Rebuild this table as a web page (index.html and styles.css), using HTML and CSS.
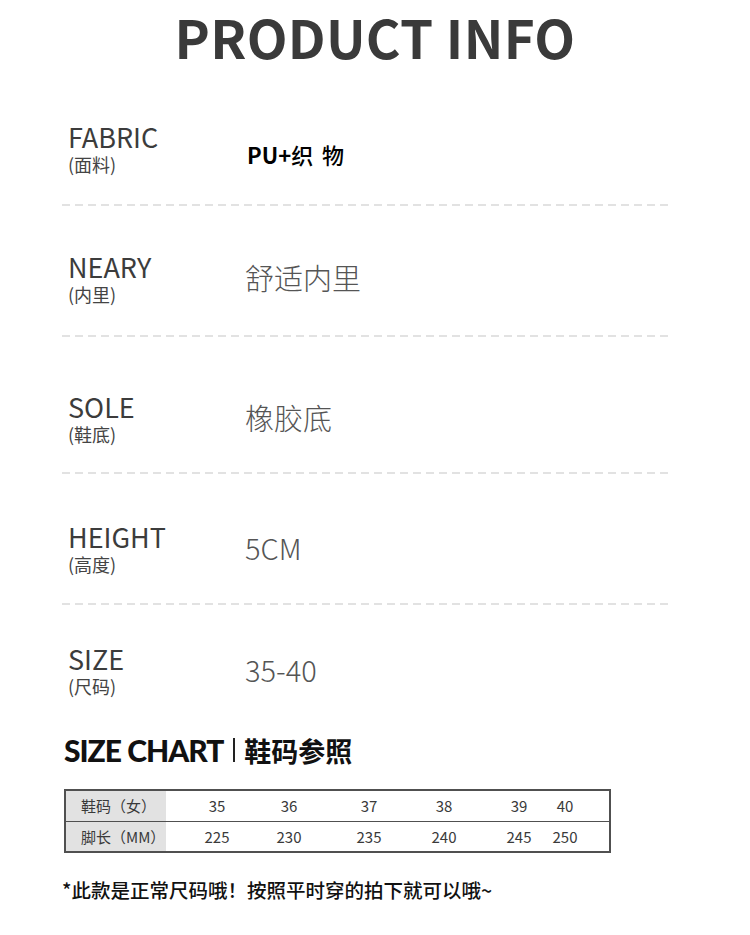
FILE: index.html
```html
<!DOCTYPE html>
<html lang="zh-CN">
<head>
<meta charset="utf-8">
<title>Product Info</title>
<link rel="stylesheet" href="styles.css">
</head>
<body>
<main class="page">
  <h1 class="title">PRODUCT INFO</h1>

  <section class="spec spec-fabric">
    <div class="label"><div class="en">FABRIC</div><div class="cn">(面料)</div></div>
    <div class="value value-bold"><span class="pu">PU+</span><span class="kai">织 物</span></div>
  </section>
  <div class="divider"></div>

  <section class="spec spec-neary">
    <div class="label"><div class="en">NEARY</div><div class="cn">(内里)</div></div>
    <div class="value">舒适内里</div>
  </section>
  <div class="divider"></div>

  <section class="spec spec-sole">
    <div class="label"><div class="en">SOLE</div><div class="cn">(鞋底)</div></div>
    <div class="value">橡胶底</div>
  </section>
  <div class="divider"></div>

  <section class="spec spec-height">
    <div class="label"><div class="en">HEIGHT</div><div class="cn">(高度)</div></div>
    <div class="value value-num">5CM</div>
  </section>
  <div class="divider"></div>

  <section class="spec spec-size">
    <div class="label"><div class="en">SIZE</div><div class="cn">(尺码)</div></div>
    <div class="value value-num">35-40</div>
  </section>

  <h2 class="chart-title"><span class="chart-en">SIZE CHART</span><span class="bar"></span><span class="chart-cn">鞋码参照</span></h2>

  <div class="size-table">
    <div class="trow">
      <div class="head">鞋码（女）</div>
      <div class="v">35</div><div class="v">36</div><div class="v">37</div><div class="v">38</div><div class="v">39</div><div class="v">40</div>
    </div>
    <div class="trow">
      <div class="head">脚长（MM）</div>
      <div class="v">225</div><div class="v">230</div><div class="v">235</div><div class="v">240</div><div class="v">245</div><div class="v">250</div>
    </div>
  </div>

  <p class="note">*此款是正常尺码哦！按照平时穿的拍下就可以哦~</p>
</main>
</body>
</html>
```

FILE: styles.css
```css
html, body {
  margin: 0;
  padding: 0;
  background: #ffffff;
}

.page {
  width: 750px;
  height: 935px;
  overflow: hidden;
  font-family: "Noto Sans CJK SC", "Noto Sans", sans-serif;
  color: #3f3f3f;
}

.title {
  margin: 0;
  text-align: center;
  font-size: 53px;
  line-height: 72px;
  font-weight: 700;
  color: #3a3a3a;
  letter-spacing: 0.3px;
}

.spec {
  display: flex;
  align-items: center;
  padding-left: 68px;
}

.spec-fabric { padding-top: 47px; padding-bottom: 29px; }
.spec-neary  { padding-top: 43px; padding-bottom: 30px; }
.spec-sole   { padding-top: 52px; padding-bottom: 27px; }
.spec-height { padding-top: 45px; padding-bottom: 28px; }
.spec-size   { padding-top: 36px; padding-bottom: 0; }

.label {
  width: 177px;
  flex: none;
}

.label .en {
  font-size: 27px;
  line-height: 35px;
  font-weight: 400;
  color: #3c3c3c;
}

.label .cn {
  font-size: 18px;
  line-height: 21px;
  color: #444;
}

.value {
  font-size: 29px;
  font-weight: 300;
  color: #555;
  line-height: 40px;
}

.value-num {
  font-size: 29px;
}

.value-bold {
  color: #000;
  font-size: 22px;
  padding-left: 2px;
  margin-top: 14px;
}

.value-bold .pu {
  font-weight: 700;
}

.value-bold .kai {
  font-weight: 500;
  letter-spacing: 2px;
}

.divider {
  margin: 0 80px 0 62px;
  height: 2px;
  background: repeating-linear-gradient(to right, #e2e2e2 0 8px, transparent 8px 13px);
}

.chart-title {
  margin: 36px 0 0 64px;
  display: flex;
  align-items: center;
  height: 34px;
  color: #111;
}

.chart-en {
  font-family: "Lato", sans-serif;
  font-weight: 900;
  font-size: 30px;
  letter-spacing: -1px;
}

.bar {
  width: 2px;
  height: 24px;
  background: #222;
  margin: 0 9px 0 10px;
}

.chart-cn {
  font-size: 27px;
  font-weight: 700;
}

.size-table {
  margin: 22px 0 0 64px;
  width: 547px;
  border: 2px solid #505050;
  box-sizing: border-box;
  font-size: 15px;
  color: #3a3a3a;
}

.trow {
  display: flex;
  height: 29.5px;
  align-items: stretch;
}

.trow + .trow {
  border-top: 1.5px solid #505050;
}

.head {
  width: 100px;
  flex: none;
  background: #e2e2e2;
  display: flex;
  align-items: center;
  padding-left: 15px;
  box-sizing: border-box;
  font-size: 15px;
}

.v {
  width: 46px;
  display: flex;
  align-items: center;
  justify-content: center;
}

.v:nth-child(2) { margin-left: 28px; }
.v:nth-child(3) { margin-left: 26px; }
.v:nth-child(4) { margin-left: 34px; }
.v:nth-child(5) { margin-left: 29px; }
.v:nth-child(6) { margin-left: 29px; }
.v:nth-child(7) { margin-left: 0; }

.note {
  margin: 24px 0 0 62px;
  font-size: 19.5px;
  line-height: 26px;
  font-weight: 500;
  color: #111;
}
```
